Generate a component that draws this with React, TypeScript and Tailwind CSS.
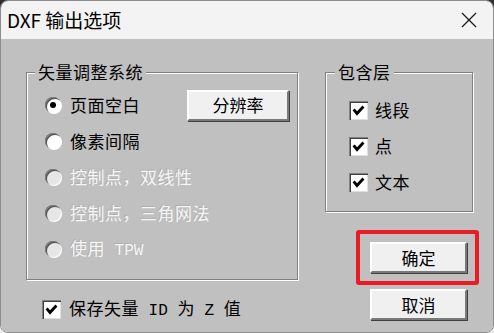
import React from 'react';

const cjk = { fontFamily: '"Noto Sans CJK SC", "Noto Sans", sans-serif' };
const mono = { fontFamily: '"Liberation Mono", monospace' };

const Radio: React.FC<{ checked?: boolean; disabled?: boolean }> = ({ checked, disabled }) => (
  <span
    className={`flex h-[16px] w-[16px] shrink-0 items-center justify-center rounded-full shadow-[inset_1px_1px_0_#808080,inset_2px_2px_0_#505050,1px_1px_0_#ffffff] ${
      disabled ? 'bg-[#e6e6e6]' : 'bg-white'
    }`}
  >
    {checked && <span className="h-[6px] w-[6px] rounded-full bg-black" />}
  </span>
);

const Check: React.FC = () => (
  <span className="flex h-[19px] w-[19px] shrink-0 items-center justify-center bg-white shadow-[inset_1px_1px_0_#808080,inset_2px_2px_0_#404040,inset_-1px_-1px_0_#dfdfdf]">
    <svg width="13" height="13" viewBox="0 0 13 13">
      <path d="M2.5 6.5 L5 9.5 L10.5 3.5" fill="none" stroke="#000" strokeWidth="2.8" strokeLinecap="square" />
    </svg>
  </span>
);

const Button: React.FC<{ label: string; className?: string }> = ({ label, className = '' }) => (
  <div
    className={`flex items-center justify-center border-t-2 border-l-2 border-t-white border-l-white border-b-2 border-r-2 border-b-[#7a7a7a] border-r-[#7a7a7a] bg-[#f0f0f0] text-[17px] text-black shadow-[1px_1px_0_#404040] ${className}`}
    style={cjk}
  >
    {label}
  </div>
);

const disabledText = 'text-[#f6f6f6] [text-shadow:-1px_-1px_0_#b0b0b0]';

const App: React.FC = () => {
  const radios = [
    { label: '页面空白', checked: true },
    { label: '像素间隔' },
    { label: '控制点，双线性', disabled: true },
    { label: '控制点，三角网法', disabled: true },
  ];

  return (
    <div className="h-[333px] w-[494px] bg-[linear-gradient(#2e2e2e_50%,#ececec_50%)]">
      <div className="flex h-[333px] w-[494px] flex-col overflow-hidden rounded-[8px] border border-[#8c8c8c]">
        {/* title bar */}
        <div className="flex h-[38px] shrink-0 items-center justify-between bg-[#f3f3f3] pl-[6px] pr-[16px]">
          <span className="text-[19px] text-black" style={cjk}>
            DXF 输出选项
          </span>
          <svg width="16" height="16" viewBox="0 0 16 16">
            <path d="M1 1 L15 15 M15 1 L1 15" stroke="#1a1a1a" strokeWidth="1.3" />
          </svg>
        </div>

        {/* body */}
        <div className="flex flex-1 bg-[#c0c0c0] pl-[25px] pt-[33px]" style={cjk}>
          {/* left column */}
          <div className="flex w-[272px] flex-col">
            <div className="relative h-[208px] border border-[#808080] pl-[18px] pr-[8px] pt-[14px] shadow-[1px_1px_0_#ffffff,inset_1px_1px_0_#ffffff]">
              <span className="absolute -top-[12px] left-[8px] bg-[#c0c0c0] px-[3px] text-[17px] leading-[22px] tracking-[0.5px] text-black">
                矢量调整系统
              </span>
              {radios.map((r) => (
                <div key={r.label} className="flex h-[36px] items-center">
                  <Radio checked={r.checked} disabled={r.disabled} />
                  <span
                    className={`ml-[9px] text-[17px] tracking-[0.5px] ${r.disabled ? disabledText : 'text-black'}`}
                  >
                    {r.label}
                  </span>
                  {r.checked && <Button label="分辨率" className="ml-auto h-[31px] w-[102px]" />}
                </div>
              ))}
              <div className="flex h-[36px] items-center">
                <Radio disabled />
                <span className={`ml-[9px] whitespace-pre text-[17px] tracking-[0.5px] ${disabledText}`}>
                  使用
                  <span className="text-[16px] tracking-normal" style={mono}>
                    {' TPW'}
                  </span>
                </span>
              </div>
            </div>

            <div className="mt-[15px] flex items-center pl-[16px]">
              <Check />
              <span className="ml-[8px] whitespace-pre text-[17px] tracking-[0.5px] text-black">
                保存矢量
                <span className="text-[16px] tracking-normal" style={mono}>
                  {' ID '}
                </span>
                为
                <span className="text-[16px] tracking-normal" style={mono}>
                  {' Z '}
                </span>
                值
              </span>
            </div>
          </div>

          {/* right column */}
          <div className="ml-[27px] flex w-[148px] flex-col">
            <div className="relative h-[140px] border border-[#808080] pl-[23px] pt-[19px] shadow-[1px_1px_0_#ffffff,inset_1px_1px_0_#ffffff]">
              <span className="absolute -top-[12px] left-[9px] bg-[#c0c0c0] px-[3px] text-[17px] leading-[22px] tracking-[0.5px] text-black">
                包含层
              </span>
              {['线段', '点', '文本'].map((t) => (
                <div key={t} className="flex h-[36px] items-center">
                  <Check />
                  <span className="ml-[7px] text-[17px] tracking-[0.5px] text-black">{t}</span>
                </div>
              ))}
            </div>

            <div className="ml-[31px] mt-[18px] w-[123px] rounded-[3px] border-[4px] border-[#e81c25] px-[10px] py-[8px]">
              <Button label="确定" className="h-[31px] w-[97px]" />
            </div>
            <Button label="取消" className="ml-[45px] mt-[4px] h-[31px] w-[97px]" />
          </div>
        </div>
      </div>
    </div>
  );
};

export default App;
